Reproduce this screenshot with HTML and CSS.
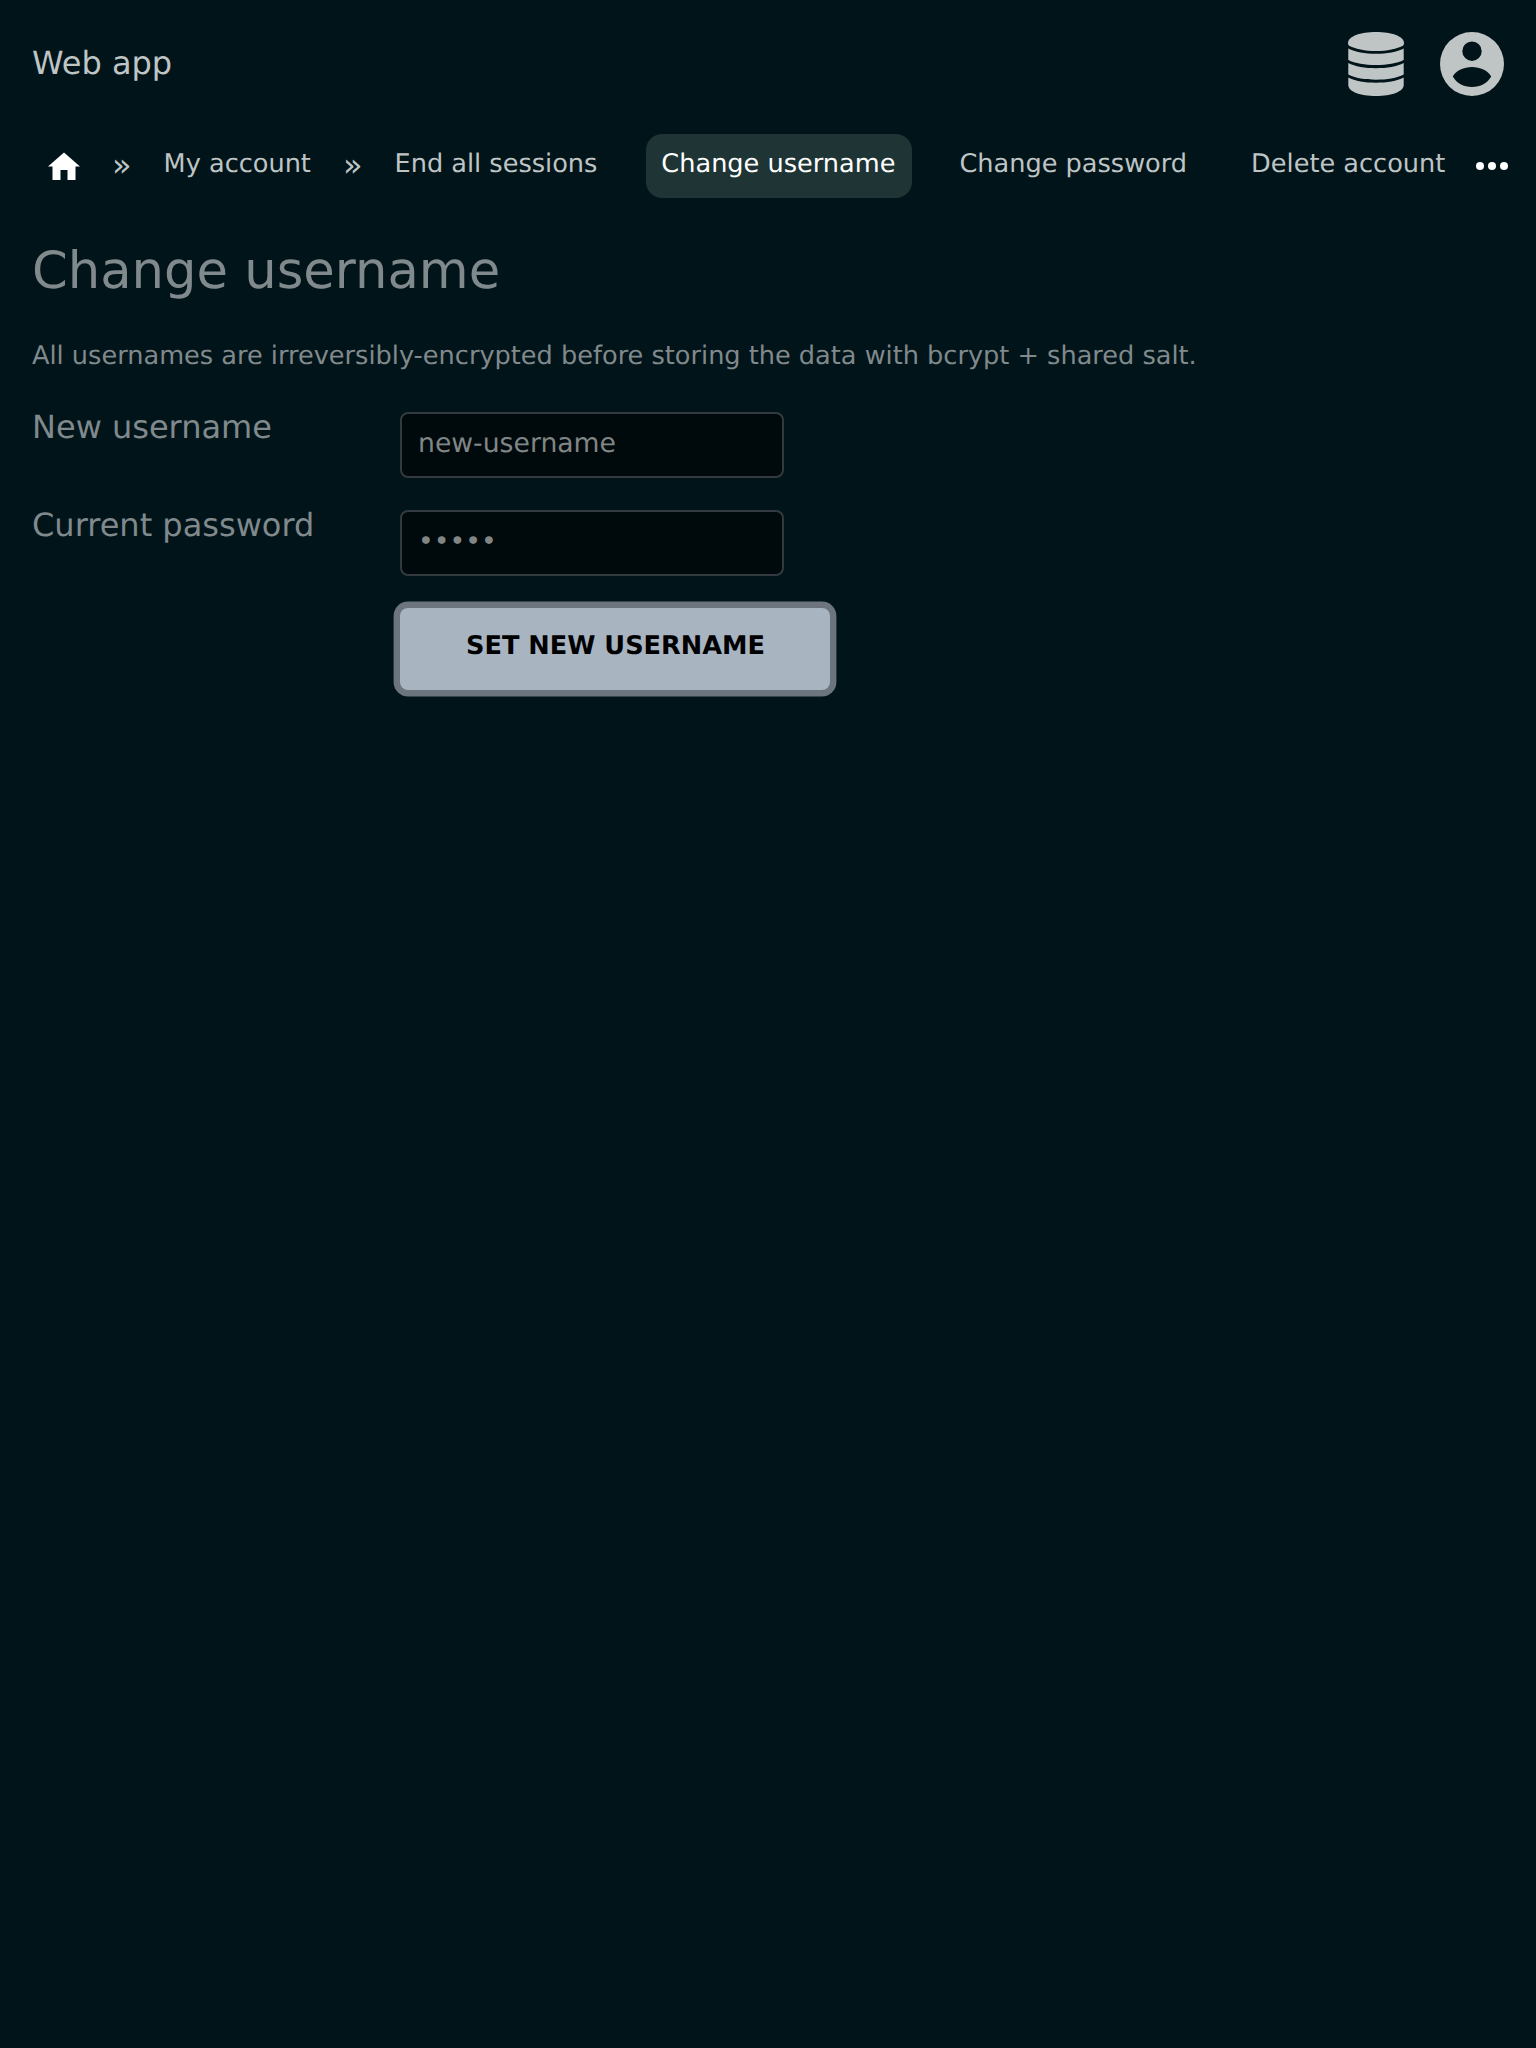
FILE: index.html
```html
<!DOCTYPE html>
<html lang="en">
<head>
<meta charset="utf-8">
<title>Change username</title>
<link rel="stylesheet" href="styles.css">
</head>
<body>
<header class="header">
  <a class="brand">Web app</a>
  <div class="header-icons">
    <svg class="icon-db" viewBox="0 0 56 64"><path d="M0 11C0 4.500 12 0 28 0S56 4.500 56 11C56 12 55.800 12.800 55.300 13.500C49 17 39 19 28 19S7 17 .7 13.500C.2 12.800 0 12 0 11z"/><path d="M.3 16.400C7 19.900 17 21.700 28 21.700S49 19.900 55.700 16.400V28C49 31.400 39 33 28 33S7 31.400 .3 28z"/><path d="M.3 31C7 34.500 17 36.200 28 36.200S49 34.500 55.700 31V42.500C49 46 39 47.700 28 47.700S7 46 .3 42.500z"/><path d="M.3 45.500C7 49 17 50.700 28 50.700S49 49 55.700 45.500V53C55.700 59.500 44 64 28 64S.3 59.500 .3 53z"/></svg>
    <svg class="icon-user" viewBox="0 0 64 64"><path fill-rule="evenodd" d="M32 0a32 32 0 1 0 0 64a32 32 0 1 0 0-64zM32 9.500a9.700 9.700 0 1 1 0 19.400a9.700 9.700 0 1 1 0-19.400zM12.800 44.500C16 38.500 24 35 32 35s16 3.500 19.200 9.500C47.500 51 40.500 55 32 55S16.500 51 12.800 44.500z"/></svg>
  </div>
</header>
<nav class="nav">
  <a class="nav-item"><svg class="icon-home" viewBox="0 0 32 32"><path d="M16 2.500L0 16.500h4.500V30h8V20h7v10h8V16.500H32z"/></svg></a>
  <span class="sep">»</span>
  <a class="nav-item">My account</a>
  <span class="sep">»</span>
  <div class="nav-group">
    <a class="nav-item">End all sessions</a>
    <a class="nav-item active">Change username</a>
    <a class="nav-item">Change password</a>
    <a class="nav-item">Delete account</a>
  </div>
  <svg class="icon-more" viewBox="0 0 32 32"><circle cx="4" cy="16" r="4"/><circle cx="16" cy="16" r="4"/><circle cx="28" cy="16" r="4"/></svg>
</nav>
<main class="main">
  <h1 class="title">Change username</h1>
  <p class="intro">All usernames are irreversibly-encrypted before storing the data with bcrypt + shared salt.</p>
  <form class="form">
    <label class="label" for="username">New username</label>
    <input class="input" id="username" type="text" placeholder="new-username">
    <label class="label" for="password">Current password</label>
    <input class="input" id="password" type="text" placeholder="•••••">
    <button class="submit" type="button">SET NEW USERNAME</button>
  </form>
</main>
</body>
</html>
```
FILE: styles.css
```css
* { box-sizing: border-box; text-rendering: geometricPrecision; }
body {
  margin: 0;
  min-height: 2048px;
  background: #001419;
  color: #80898c;
  font: 25.6px/40px "DejaVu Sans", sans-serif;
}
.header {
  display: flex;
  justify-content: space-between;
  padding: 32px 32px 38px;
  color: #bfc4c5;
  font-size: 32px;
}
.brand { line-height: 62px; }
.header-icons { display: flex; gap: 36px; }
.icon-db { width: 56px; height: 64px; fill: currentColor; }
.icon-user { width: 64px; height: 64px; fill: currentColor; }
.nav {
  display: flex;
  height: 64px;
  padding-left: 32px;
  gap: 16px;
  color: #bfc4c5;
  line-height: 60px;
  white-space: nowrap;
}
.nav-group { display: flex; gap: 32px; }
.nav-item { padding: 0 16px; border-radius: 16px; }
.active {
  margin-left: 0.6px;
  margin-right: -0.6px;
  padding-left: 15.4px;
  padding-right: 16.6px;
  background: #1e3435;
  color: #fff;
}
.sep { font-size: 32px; line-height: 62px; }
.icon-home { display: block; width: 32px; height: 32px; margin-top: 16px; fill: #fff; }
.icon-more { flex: none; width: 32px; height: 32px; margin: 16px 0 0 -1.4px; fill: #fff; }
.main { padding: 41px 32px; }
.title { margin: 0; font-size: 51.2px; font-weight: 400; line-height: 64px; }
.intro { margin: 33px 0 36px; }
.form {
  display: grid;
  grid-template-columns: 368px max-content;
  row-gap: 32px;
}
.label { font-size: 32px; line-height: 30px; }
.input {
  width: 384px;
  height: 66px;
  padding: 0 16px 3px;
  border: 2px solid #333a3f;
  border-radius: 8px;
  background: #00090b;
  color: #808686;
  font: 26.66px "DejaVu Sans", sans-serif;
}
.input::placeholder { color: #808686; opacity: 1; }
.submit {
  grid-column: 2;
  width: 430px;
  height: 82px;
  padding: 0 0 6px 1px;
  border: 0;
  border-radius: 8px;
  background: #a8b4c0;
  box-shadow: 0 0 0 6.4px #6c757e;
  color: #000;
  font: bold 25.6px "DejaVu Sans", sans-serif;
}
```
